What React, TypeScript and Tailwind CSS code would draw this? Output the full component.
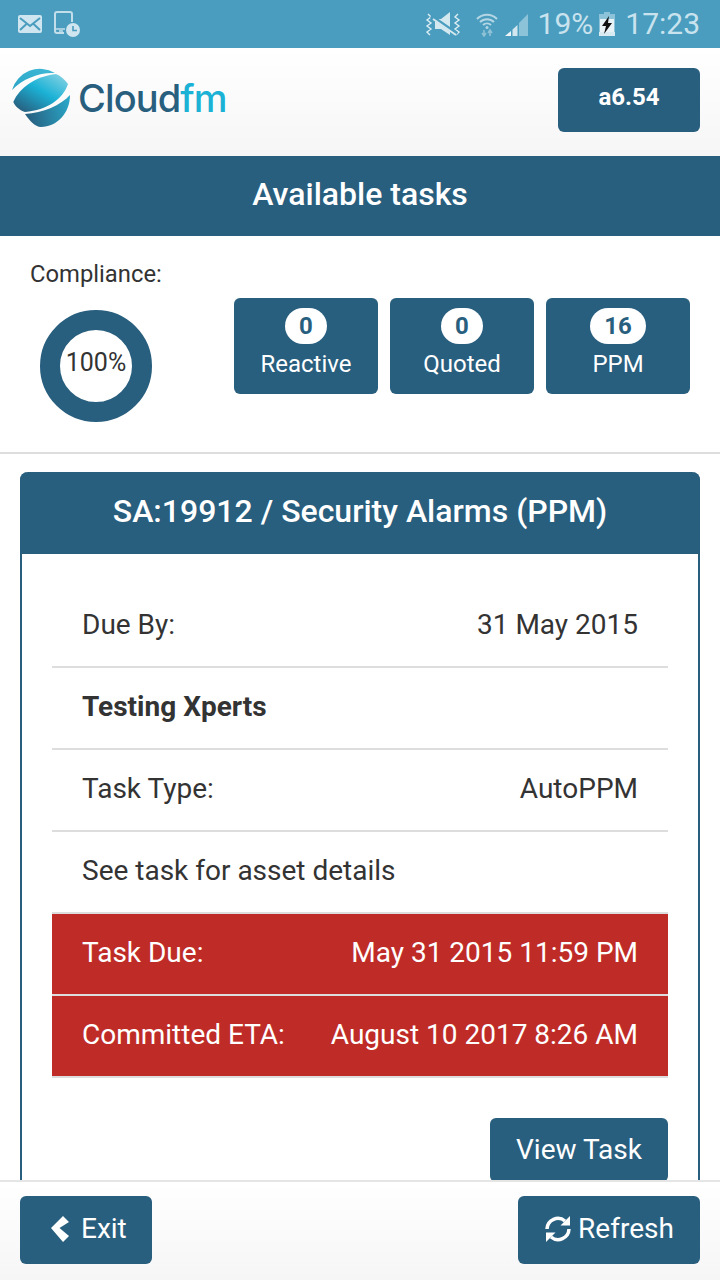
const navy = "bg-[#285e7e]";

function StatusBar() {
  return (
    <div className="flex h-12 shrink-0 items-center bg-[#4a9dbe] pl-[18px] pr-[20px] text-[#c9e3ee]">
      <svg width="24" height="18" viewBox="0 0 24 18" className="mr-[12px]">
        <rect width="24" height="18" rx="2" fill="#cfe5ef" />
        <path d="M2 3l10 8 10-8M2 15l7-6.5M22 15l-7-6.5" fill="none" stroke="#4a9dbe" strokeWidth="2" />
      </svg>
      <svg width="26" height="26" viewBox="0 0 26 26">
        <path d="M10 22H3a2 2 0 0 1-2-2V3a2 2 0 0 1 2-2h13a2 2 0 0 1 2 2v8" fill="none" stroke="#c2deea" strokeWidth="2" />
        <path d="M2 18h9M5 20h4" stroke="#c2deea" strokeWidth="1.5" />
        <circle cx="19" cy="19" r="7" fill="#cfe5ef" />
        <path d="M19 15v4.5h4" fill="none" stroke="#4a9dbe" strokeWidth="1.6" />
      </svg>
      <div className="flex-1" />
      <svg width="36" height="24" viewBox="0 0 36 24" className="mr-[14px]" fill="none">
        <path d="M3 2l3 3-4 3 4 3-4 3 4 3-4 3 3 3M33 2l-3 3 4 3-4 3 4 3-4 3 4 3-3 3" stroke="#dcedf4" strokeWidth="1.4" />
        <path d="M10 7h6l9-7v23l-9-6h-6z" fill="#d4e8f0" />
        <path d="M6 4l26 18" stroke="#4a9dbe" strokeWidth="3.5" />
        <path d="M8 7l23 16" stroke="#d4e8f0" strokeWidth="2" />
      </svg>
      <svg width="24" height="26" viewBox="0 0 24 26" className="mr-[6px]" fill="none">
        <path d="M2 8a14 14 0 0 1 20 0M5 11a10 10 0 0 1 14 0M8 14a6 6 0 0 1 8 0" stroke="#b4d6e4" strokeWidth="2" />
        <circle cx="12" cy="16.5" r="1.5" fill="#b4d6e4" />
        <path d="M9 19v6M15 19v6M7 22l2 3 2-3M13 22l2-3 2 3" stroke="#8fc2d6" strokeWidth="1.6" />
      </svg>
      <svg width="24" height="26" viewBox="0 0 24 26" className="mr-[9px]">
        <path d="M0 25l6-5v5z" fill="#fff" opacity="0.9" />
        <path d="M7.5 25v-6.5l5-4.5v11z" fill="#fff" opacity="0.75" />
        <path d="M14 25V12l9-9v22z" fill="#8cc3d9" />
      </svg>
      <span className="font-['Roboto',sans-serif] text-[30px] leading-none">19%</span>
      <svg width="16" height="24" viewBox="0 0 16 24" className="ml-[6px] mr-[10px]">
        <rect x="5" y="0" width="6" height="3" fill="#8cc3d9" />
        <rect x="0" y="2" width="16" height="22" fill="#8cc3d9" />
        <rect x="0" y="20" width="16" height="4" fill="#d8ebf3" />
        <rect x="1" y="7" width="14" height="13" fill="#e8f3f7" />
        <path d="M10 4L3 14h4l-2 8 8-11H9z" fill="#111" />
      </svg>
      <span className="font-['Roboto',sans-serif] text-[30px] leading-none">17:23</span>
    </div>
  );
}

function Logo() {
  return (
    <div className="-mt-[4px] flex items-center">
      <svg width="60" height="62" viewBox="0 0 60 62">
        <defs>
          <linearGradient id="lens" x1="0.1" y1="0.95" x2="0.9" y2="0.05">
            <stop offset="0" stopColor="#285e7e" />
            <stop offset="0.55" stopColor="#1bb2d6" />
            <stop offset="1" stopColor="#7fd0e2" />
          </linearGradient>
          <linearGradient id="capTop" x1="0" y1="1" x2="1" y2="0">
            <stop offset="0" stopColor="#2aa5c6" />
            <stop offset="1" stopColor="#3fb9d6" />
          </linearGradient>
          <linearGradient id="capBottom" x1="0" y1="0.6" x2="1" y2="0.4">
            <stop offset="0" stopColor="#285e7e" />
            <stop offset="1" stopColor="#2aa5c6" />
          </linearGradient>
        </defs>
        <path d="M1 23A29 29 0 0 1 44 6C30 5 12 11 1 23z" fill="url(#capTop)" />
        <path d="M2.3 35C8 21 25 9 45 7C50 9 54 13 57 17C52 32 36 43 14 45C8 43 4 39 2.3 35z" fill="url(#lens)" />
        <path d="M14 47C32 46 50 38 59 28C59 46 46 60 30 60C24 60 18 53 14 47z" fill="url(#capBottom)" />
      </svg>
      <div className="ml-[7px] font-['Inter',sans-serif] text-[38px] font-medium leading-none tracking-[-0.9px]">
        <span className="text-[#285e7e]">Cloud</span>
        <span className="text-[#1bb2d6]">fm</span>
      </div>
    </div>
  );
}

function Stat({ n, label, pillW }: { n: string; label: string; pillW: string }) {
  return (
    <div className={`flex h-24 w-36 flex-col items-center rounded-md ${navy} pt-[10px] text-white`}>
      <div className={`flex h-9 ${pillW} items-center justify-center rounded-full bg-white text-[24px] font-bold leading-none text-[#285e7e]`}>
        {n}
      </div>
      <div className="mt-1 text-[24px] leading-[32px]">{label}</div>
    </div>
  );
}

function Row({ left, right, bold }: { left: string; right?: string; bold?: boolean }) {
  return (
    <div className="flex h-[82px] items-center justify-between border-b-2 border-[#dddddd] px-[30px] pb-[2px] text-[28px] text-[#333333]">
      <span className={bold ? "font-bold" : ""}>{left}</span>
      {right && <span>{right}</span>}
    </div>
  );
}

function RedRow({ left, right }: { left: string; right: string }) {
  return (
    <div className="flex h-[82px] items-center justify-between border-b-2 border-[#dddddd] bg-[#bf2c27] px-[30px] pb-[2px] text-[28px] text-white">
      <span>{left}</span>
      <span>{right}</span>
    </div>
  );
}

export default function App() {
  return (
    <div className="flex h-[1280px] w-[720px] flex-col overflow-hidden bg-white font-['Roboto',sans-serif]">
      <StatusBar />
      <header className="flex h-[108px] shrink-0 items-center justify-between bg-gradient-to-b from-white to-[#f6f6f6] pb-1 pl-[11px] pr-5">
        <Logo />
        <button className={`flex h-16 w-[142px] items-center justify-center rounded-md ${navy} pb-[6px] text-[24px] font-bold text-white`}>
          a6.54
        </button>
      </header>
      <div className={`flex h-20 shrink-0 items-center justify-center ${navy} pb-1 text-[32px] font-medium text-white`}>
        Available tasks
      </div>
      <main className="min-h-0 flex-1 overflow-hidden">
        <section className="flex h-[218px] border-b-2 border-[#dddddd]">
          <div className="w-[234px] shrink-0 pl-[30px] pt-[24px]">
            <div className="text-[23.8px] leading-[28px] text-[#333333]">Compliance:</div>
            <div className="ml-[10px] mt-[22px] flex h-28 w-28 items-center justify-center rounded-full border-[20px] border-[#285e7e] pb-[6px] text-[25px] text-[#333333]">
              100%
            </div>
          </div>
          <div className="flex gap-3 pt-[62px]">
            <Stat n="0" label="Reactive" pillW="w-[42px]" />
            <Stat n="0" label="Quoted" pillW="w-[42px]" />
            <Stat n="16" label="PPM" pillW="w-14" />
          </div>
        </section>
        <section className="mx-5 mt-[18px] rounded-t-lg border-x-2 border-[#285e7e]">
          <div className={`-mx-[2px] flex h-[82px] items-center justify-center rounded-t-lg ${navy} pb-1 text-[32px] font-medium text-white`}>
            SA:19912 / Security Alarms (PPM)
          </div>
          <div className="px-[30px] pt-[32px]">
            <Row left="Due By:" right="31 May 2015" />
            <Row left="Testing Xperts" bold />
            <Row left="Task Type:" right="AutoPPM" />
            <Row left="See task for asset details" />
            <RedRow left="Task Due:" right="May 31 2015 11:59 PM" />
            <RedRow left="Committed ETA:" right="August 10 2017 8:26 AM" />
            <div className="flex justify-end pt-10">
              <button className={`h-16 w-[178px] rounded-md ${navy} text-[28px] text-white`}>View Task</button>
            </div>
          </div>
        </section>
      </main>
      <footer className="flex h-[100px] shrink-0 items-center justify-between border-t-2 border-[#e5e5e5] bg-gradient-to-b from-white to-[#f6f6f6] px-5 pb-[2px]">
        <button className={`flex h-[68px] w-[132px] items-center gap-[11px] rounded-md ${navy} pb-[2px] pl-[30px] text-[28px] text-white`}>
          <svg width="20" height="28" viewBox="0 0 20 28" fill="#ffffff">
            <path d="M1 13L13 1l6 6-9.5 6L19 21l-6 6z" />
          </svg>
          Exit
        </button>
        <button className={`flex h-[68px] w-[182px] items-center justify-center gap-[6px] rounded-md ${navy} pb-[2px] text-[28px] text-white`}>
          <svg width="28" height="28" viewBox="0 0 28 28" fill="#ffffff">
            <path d="M3 14A11 11 0 0 1 21 6" fill="none" stroke="#ffffff" strokeWidth="3.5" />
            <path d="M26 1v9.5h-9.5z" />
            <path d="M25 14A11 11 0 0 1 7 22" fill="none" stroke="#ffffff" strokeWidth="3.5" />
            <path d="M2 27v-9.5h9.5z" />
          </svg>
          Refresh
        </button>
      </footer>
    </div>
  );
}
